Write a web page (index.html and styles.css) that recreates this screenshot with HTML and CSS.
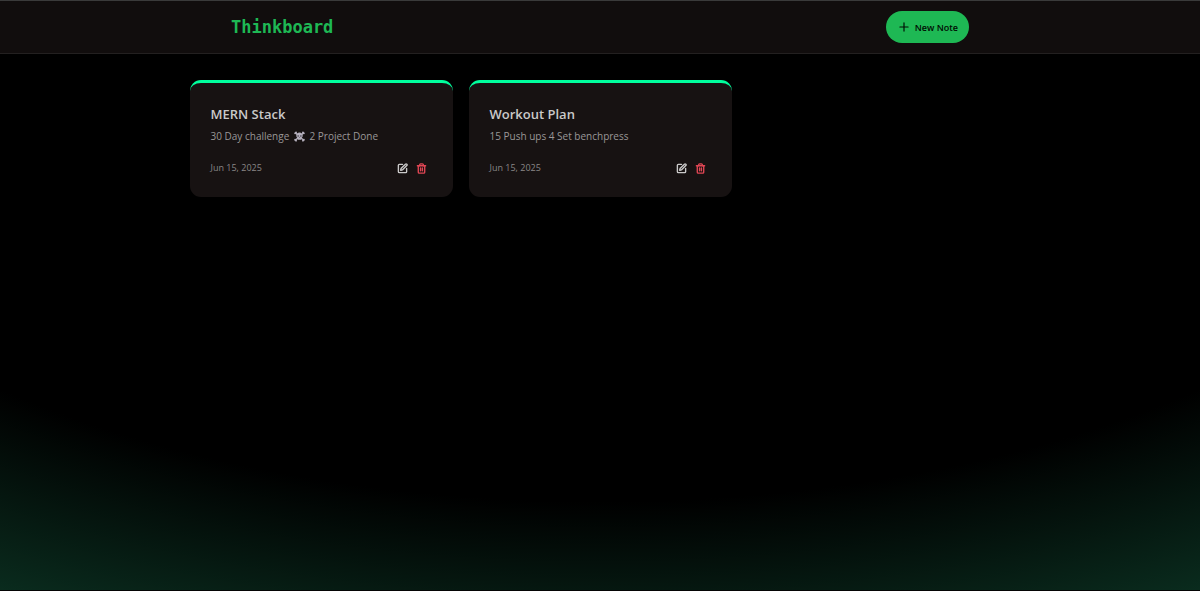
FILE: index.html
```html
<!DOCTYPE html>
<html lang="en">
<head>
    <meta charset="UTF-8">
    <meta name="viewport" content="width=device-width, initial-scale=1.0">
    <title>Thinkboard</title>
    <link rel="stylesheet" href="styles.css">
</head>
<body>

<!-- Shared icons -->
<svg class="sprite" aria-hidden="true">
    <symbol id="icon-plus" viewBox="0 0 24 24">
        <path d="M5 12h14"/>
        <path d="M12 5v14"/>
    </symbol>
    <symbol id="icon-edit" viewBox="0 0 24 24">
        <path d="M12 3H5a2 2 0 0 0-2 2v14a2 2 0 0 0 2 2h14a2 2 0 0 0 2-2v-7"/>
        <path d="M18.375 2.625a1 1 0 0 1 3 3l-9.013 9.014a2 2 0 0 1-.853.505l-2.873.84a.5.5 0 0 1-.62-.62l.84-2.873a2 2 0 0 1 .506-.852z"/>
    </symbol>
    <symbol id="icon-trash" viewBox="0 0 24 24">
        <path d="M3 6h18"/>
        <path d="M19 6v14c0 1-1 2-2 2H7c-1 0-2-1-2-2V6"/>
        <path d="M8 6V4c0-1 1-2 2-2h4c1 0 2 1 2 2v2"/>
        <path d="M10 11v6"/>
        <path d="M14 11v6"/>
    </symbol>
</svg>

<header class="navbar">
    <div class="navbar-inner">
        <h1 class="brand">Thinkboard</h1>
        <a href="#" class="new-note">
            <svg class="icon-plus"><use href="#icon-plus"/></svg>
            <span>New Note</span>
        </a>
    </div>
</header>

<!-- Notes -->
<main class="notes">
    <article class="note-card">
        <h2 class="note-title">MERN Stack</h2>
        <p class="note-text">30 Day challenge
            <svg class="skull" viewBox="0 0 24 24" role="img" aria-label="skull and crossbones">
                <path class="bones" d="M3 4l18 16M21 4L3 20"/>
                <g class="bone-ends">
                    <circle cx="2.500" cy="5" r="2"/><circle cx="4.500" cy="3" r="2"/>
                    <circle cx="21.500" cy="5" r="2"/><circle cx="19.500" cy="3" r="2"/>
                    <circle cx="2.500" cy="19" r="2"/><circle cx="4.500" cy="21" r="2"/>
                    <circle cx="21.500" cy="19" r="2"/><circle cx="19.500" cy="21" r="2"/>
                </g>
                <path class="head" d="M12 3c-4.500 0-7 3-7 7 0 3 1.200 4.500 3 5.500V19h8v-3.500c1.800-1 3-2.500 3-5.500 0-4-2.500-7-7-7z"/>
                <circle class="eye" cx="9" cy="11" r="1.600"/>
                <circle class="eye" cx="15" cy="11" r="1.600"/>
                <path class="eye" d="M12 13l1 2h-2z"/>
            </svg>
            2 Project Done</p>
        <div class="note-footer">
            <time class="note-date" datetime="2025-06-15">Jun 15, 2025</time>
            <div class="note-actions">
                <a href="#" class="edit-btn" aria-label="Edit note"><svg><use href="#icon-edit"/></svg></a>
                <button type="button" class="delete-btn" aria-label="Delete note"><svg><use href="#icon-trash"/></svg></button>
            </div>
        </div>
    </article>

    <article class="note-card">
        <h2 class="note-title">Workout Plan</h2>
        <p class="note-text">15 Push ups 4 Set benchpress</p>
        <div class="note-footer">
            <time class="note-date" datetime="2025-06-15">Jun 15, 2025</time>
            <div class="note-actions">
                <a href="#" class="edit-btn" aria-label="Edit note"><svg><use href="#icon-edit"/></svg></a>
                <button type="button" class="delete-btn" aria-label="Delete note"><svg><use href="#icon-trash"/></svg></button>
            </div>
        </div>
    </article>
</main>

</body>
</html>
```

FILE: styles.css
```css
* {
    box-sizing: border-box;
}
html {
    background-color: #171212;
}
body {
    margin: 0;
    min-height: 100vh;
    font-family: "Segoe UI", "Open Sans", sans-serif;
    color: #cac9c9;
    background: radial-gradient(125% 125% at 50% 10%, #000 60%, #00ff9d40 100%);
    border-bottom: 1px solid #050505;
}
h1, h2, p {
    margin: 0;
}
svg {
    fill: none;
    stroke: currentColor;
    stroke-width: 2;
    stroke-linecap: round;
    stroke-linejoin: round;
}
.sprite {
    display: none;
}

/* Top bar */
.navbar {
    background-color: #110d0d;
    border-top: 1px solid #3a3a3a;
    border-bottom: 1px solid #232020;
}
.navbar-inner {
    display: flex;
    align-items: center;
    justify-content: space-between;
    max-width: 738px;
    height: 52px;
    margin: 0 auto;
}
.brand {
    font-family: Consolas, "DejaVu Sans Mono", monospace;
    font-size: 17px;
    line-height: 24px;
    font-weight: bold;
    color: #1eb854;
}
.new-note {
    display: flex;
    align-items: center;
    gap: 4px;
    height: 32px;
    padding: 0 11px;
    border-radius: 16px;
    background-color: #1eb854;
    color: #000c02;
    font-size: 9px;
    font-weight: 600;
    text-decoration: none;
}
.icon-plus {
    width: 14px;
    height: 14px;
}

/* Note cards */
.notes {
    display: grid;
    grid-template-columns: repeat(3, 1fr);
    gap: 16px;
    max-width: 821px;
    margin: 0 auto;
    padding-top: 26px;
}
.note-card {
    padding: 21px;
    background-color: #171212;
    border-top: 3px solid #00ff9d;
    border-radius: 11px;
}
.note-title {
    font-size: 13px;
    line-height: 20px;
    font-weight: 600;
}
.note-text {
    margin-top: 4px;
    font-size: 10px;
    line-height: 17px;
    color: #9a9797;
}
.skull {
    width: 11px;
    height: 11px;
    margin: 0 2px;
    vertical-align: -2px;
    stroke: none;
}
.bones {
    stroke: #b5b0bd;
    stroke-width: 3;
}
.bone-ends,
.head {
    fill: #b5b0bd;
}
.eye {
    fill: #3a3540;
}
.note-footer {
    display: flex;
    align-items: center;
    justify-content: space-between;
    margin-top: 15px;
}
.note-date {
    font-size: 9px;
    line-height: 16px;
    color: #8a8787;
}
.note-actions {
    display: flex;
    align-items: center;
    gap: 8px;
    padding-right: 5px;
}
.edit-btn,
.delete-btn {
    display: flex;
    padding: 0;
    border: none;
    background: none;
    color: inherit;
    cursor: pointer;
}
.delete-btn {
    color: #e04654;
}
.note-actions svg {
    width: 11px;
    height: 11px;
    stroke-width: 3;
}
```
